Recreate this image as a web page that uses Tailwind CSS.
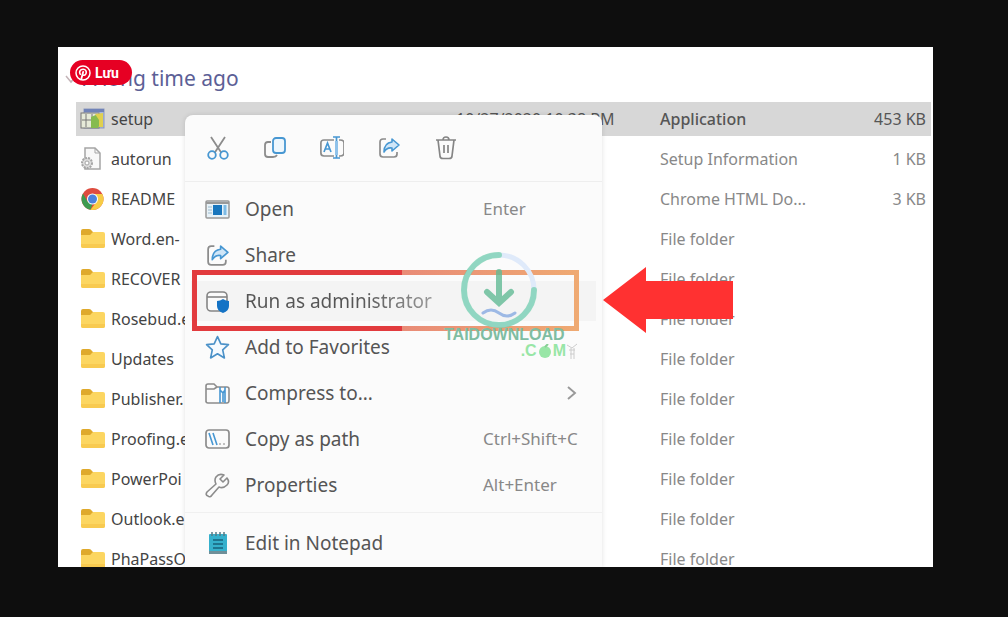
<!DOCTYPE html>
<html lang="vi">
<head>
<meta charset="utf-8">
<title>Run as administrator</title>
<script src="https://cdn.jsdelivr.net/npm/@tailwindcss/browser@4"></script>
</head>
<body class="h-screen overflow-hidden bg-[#0e0e0e] pt-[47px] pr-[75px] pb-[50px] pl-[58px] font-['Noto_Sans','Open_Sans',sans-serif]">
<svg class="hidden">
  <symbol id="folder" viewBox="0 0 24 20"><path d="M0 2Q0 0 2 0H8Q10 0 11 2L12 3H22V10H0Z" fill="#dfa92c"/><path d="M0 6H9L12 3H22Q24 3 24 5V17Q24 19 22 19H2Q0 19 0 17Z" fill="#fcd661"/><path d="M0 15H24V17Q24 19 22 19H2Q0 19 0 17Z" fill="#f8ca50"/></symbol>
  <symbol id="share" viewBox="0 0 24 24"><path d="M9 3H6Q3 3 3 6V18Q3 21 6 21H17Q20 21 20 18V16" fill="none" stroke="#8c8c8c" stroke-width="1.7"/><path d="M15 3L22 9L15 15V12Q10 11 7 16Q7 7 15 6Z" fill="#cfe6f8" stroke="#4797d2" stroke-width="1.6" stroke-linejoin="round"/></symbol>
</svg>
<main class="relative h-full overflow-hidden bg-white">
  <h1 class="flex h-[52px] items-center pt-3 pl-[25px] text-[21px] text-[#5c6096]">A long time ago</h1>
  <svg class="absolute top-[26px] left-[7px] h-3 w-3" viewBox="0 0 12 12"><path d="M1 3L6 9L11 3" fill="none" stroke="#c4b4b8" stroke-width="1.5"/></svg>
  <button class="absolute top-[13px] left-3 flex h-[25px] w-[62px] items-center gap-1 rounded-full bg-[#e60023] pl-[5px] font-['Roboto','Noto_Sans',sans-serif] text-sm font-bold text-white">
    <svg class="h-4 w-4" viewBox="0 0 16 16" fill="none" stroke="#fff" stroke-linecap="round"><circle cx="8" cy="8" r="7" stroke-width="1.500"/><path d="M5.300 9.300Q3.800 6.800 5.500 5.200Q8 3.200 10.400 5Q12 6.800 10.700 9.200Q9.400 11 7.700 9.800" stroke-width="1.500"/><path d="M8.200 6.800L6.400 13.800" stroke-width="1.800"/></svg>
    Lưu
  </button>

  <table class="w-full table-fixed border-collapse text-base whitespace-nowrap text-[#888]">
    <colgroup><col class="w-[398px]"><col class="w-[204px]"><col><col class="w-[120px]"></colgroup>
    <tbody>
      <tr class="text-[#555]">
        <td class="h-10 p-0 pl-[18px]"><div class="flex h-[34px] items-center bg-[#d7d7d7] text-[#444]">
          <svg class="mr-[6px] ml-1 h-6 w-[25px]" viewBox="0 0 25 24"><rect x="4" y="2" width="20" height="19" fill="#a8b7dc" stroke="#8d99bd"/><path d="M4 2H24V5H4Z" fill="#7083b8"/><rect x="1" y="6" width="18" height="15" fill="#e6ead9" stroke="#777"/><path d="M6 7V20M12 7V20M2 13H17" stroke="#777"/><path d="M11 10L18 7L22 12L18 21H11Z" fill="#86bb4f"/><path d="M15 7L23 6V20H19V13Z" fill="#e0d04f"/></svg>setup</div></td>
        <td class="p-0"><div class="flex h-[34px] items-center bg-[#d7d7d7]">10/27/2020 10:38 PM</div></td>
        <td class="p-0 font-medium"><div class="flex h-[34px] items-center bg-[#d7d7d7]">Application</div></td>
        <td class="p-0 pr-[2px]"><div class="flex h-[34px] items-center justify-end bg-[#d7d7d7] pr-[5px]">453 KB</div></td>
      </tr>
      <tr>
        <td class="h-10 p-0 pl-[22px]"><div class="flex items-center text-[#444]"><svg class="mr-[6px] h-6 w-[25px]" viewBox="0 0 25 24"><path d="M5 1H15L20 6V22H5Z" fill="#f8f8f8" stroke="#a5a5a5" stroke-width="1.500"/><path d="M15 1V6H20" fill="none" stroke="#a5a5a5"/><circle cx="7" cy="16" r="5" fill="#ddd" stroke="#a5a5a5" stroke-width="2" stroke-dasharray="2 1"/><circle cx="7" cy="16" r="2" fill="#fff" stroke="#a5a5a5"/></svg>autorun</div></td>
        <td></td><td class="p-0">Setup Information</td><td class="p-0 pr-[7px] text-right">1 KB</td>
      </tr>
      <tr>
        <td class="h-10 p-0 pl-[22px]"><div class="flex items-center text-[#444]"><svg class="mr-[6px] h-6 w-[25px]" viewBox="0 0 24 24"><circle cx="12" cy="12" r="11" fill="#de4c3f"/><path d="M2.500 6.500L7.200 14.800L12 17L10 22.800A11 11 0 0 1 2.500 6.500Z" fill="#3e9b50"/><path d="M12 7H21.800A11 11 0 0 1 10 22.800L16.300 14.500Z" fill="#f7cc45"/><circle cx="12" cy="12" r="5.500" fill="#fff"/><circle cx="12" cy="12" r="4.500" fill="#4a82dc"/></svg>README</div></td>
        <td></td><td class="p-0">Chrome HTML Do...</td><td class="p-0 pr-[7px] text-right">3 KB</td>
      </tr>
      <tr><td class="h-10 p-0 pl-[23px]"><div class="flex items-center text-[#444]"><svg class="mr-[6px] h-5 w-6"><use href="#folder"/></svg>Word.en-</div></td><td></td><td class="p-0">File folder</td><td></td></tr>
      <tr><td class="h-10 p-0 pl-[23px]"><div class="flex items-center text-[#444]"><svg class="mr-[6px] h-5 w-6"><use href="#folder"/></svg>RECOVER</div></td><td></td><td class="p-0">File folder</td><td></td></tr>
      <tr><td class="h-10 p-0 pl-[23px]"><div class="flex items-center text-[#444]"><svg class="mr-[6px] h-5 w-6"><use href="#folder"/></svg>Rosebud.e</div></td><td></td><td class="p-0">File folder</td><td></td></tr>
      <tr><td class="h-10 p-0 pl-[23px]"><div class="flex items-center text-[#444]"><svg class="mr-[6px] h-5 w-6"><use href="#folder"/></svg>Updates</div></td><td></td><td class="p-0">File folder</td><td></td></tr>
      <tr><td class="h-10 p-0 pl-[23px]"><div class="flex items-center text-[#444]"><svg class="mr-[6px] h-5 w-6"><use href="#folder"/></svg>Publisher.</div></td><td></td><td class="p-0">File folder</td><td></td></tr>
      <tr><td class="h-10 p-0 pl-[23px]"><div class="flex items-center text-[#444]"><svg class="mr-[6px] h-5 w-6"><use href="#folder"/></svg>Proofing.e</div></td><td></td><td class="p-0">File folder</td><td></td></tr>
      <tr><td class="h-10 p-0 pl-[23px]"><div class="flex items-center text-[#444]"><svg class="mr-[6px] h-5 w-6"><use href="#folder"/></svg>PowerPoi</div></td><td></td><td class="p-0">File folder</td><td></td></tr>
      <tr><td class="h-10 p-0 pl-[23px]"><div class="flex items-center text-[#444]"><svg class="mr-[6px] h-5 w-6"><use href="#folder"/></svg>Outlook.e</div></td><td></td><td class="p-0">File folder</td><td></td></tr>
      <tr><td class="h-10 p-0 pl-[23px]"><div class="flex items-center text-[#444]"><svg class="mr-[6px] h-5 w-6"><use href="#folder"/></svg>PhaPassO</div></td><td></td><td class="p-0">File folder</td><td></td></tr>
    </tbody>
  </table>

  <nav class="absolute top-[68px] bottom-0 left-[127px] w-[417px] overflow-hidden rounded-t-lg bg-[#fbfbfb] text-[19px] text-[#555] shadow-[0_0_5px_rgba(0,0,0,0.12)]">
    <div class="flex h-[67px] items-center gap-[33px] border-b border-[#eeeeee] pl-[21px]">
      <button aria-label="Cut"><svg class="h-6 w-6" viewBox="0 0 24 24" fill="none" stroke-width="1.800"><path d="M5 1L15.500 17M19 1L8.500 17" stroke="#8c8c8c"/><circle cx="6" cy="19" r="3.800" stroke="#4797d2"/><circle cx="18" cy="19" r="3.800" stroke="#4797d2"/></svg></button>
      <button aria-label="Copy"><svg class="h-6 w-6" viewBox="0 0 24 24" fill="none" stroke-width="1.800"><path d="M8 6H5Q2 6 2 9V18Q2 21 5 21H10Q13 21 14 19" stroke="#8c8c8c"/><rect x="10" y="2" width="12" height="15" rx="3" fill="#eef7fd" stroke="#4797d2"/></svg></button>
      <button aria-label="Rename"><svg class="h-6 w-6" viewBox="0 0 24 24" fill="none" stroke-width="1.700"><path d="M14 4H4Q0.900 4 0.900 7V17Q0.900 20 4 20H14M19 4H20Q24 4 24 7V17Q24 20 20 20H19" stroke="#8c8c8c"/><path d="M4 16L7.500 7L11 16M5 13H10M13 1H20M16.500 1V22M13 22H20" stroke="#4797d2"/><path d="M15 5H18V19H15Z" fill="#8fc2ea"/></svg></button>
      <button aria-label="Share"><svg class="h-6 w-6"><use href="#share"/></svg></button>
      <button aria-label="Delete"><svg class="h-6 w-6" viewBox="0 0 24 24" fill="none" stroke="#858585" stroke-width="1.700"><path d="M2 4H22M9 4Q9 1 12 1Q15 1 15 4M4 4L6 20Q6 22.500 9 22.500H15Q18 22.500 18 20L20 4M10 9V17M14 9V17"/></svg></button>
    </div>
    <ul class="border-b border-[#f0f0f0] pt-1 pb-1">
      <li><button class="flex h-[46px] w-full items-center pl-5"><svg class="mr-[15px] h-[25px] w-[25px]" viewBox="0 0 25 25"><rect x="1" y="4" width="23" height="17" rx="1" fill="#e8f2f8" stroke="#999" stroke-width="1.500"/><path d="M1 6H24" stroke="#999" stroke-width="2"/><path d="M3 10H7M3 13H7M3 16H7" stroke="#9bbacd"/><rect x="8" y="8" width="9" height="10" fill="#1976bd"/><path d="M20 8V18" stroke="#7ebbe5" stroke-width="3"/></svg>Open<span class="ml-auto w-[119px] text-left text-[17px] text-[#888]">Enter</span></button></li>
      <li><button class="flex h-[46px] w-full items-center pl-5"><svg class="mr-[15px] h-[25px] w-[25px]"><use href="#share"/></svg>Share</button></li>
      <li class="relative"><span class="absolute inset-x-[6px] top-[3px] bottom-[3px] bg-[#f4f4f4]"></span><button class="relative flex h-[46px] w-full items-center pl-5"><svg class="mr-[15px] h-[25px] w-[25px]" viewBox="0 0 25 25"><rect x="2" y="3" width="20" height="19" rx="4" fill="#fafafa" stroke="#858585" stroke-width="1.600"/><path d="M2 8H22" stroke="#858585" stroke-width="1.600"/><path d="M18 10Q21 12 24 12V17Q24 22 18 24Q12 22 12 17V12Q15 12 18 10Z" fill="#1473c5"/></svg><span class="bg-linear-to-r from-[#555] from-60% to-[#999] bg-clip-text text-transparent">Run as administrator</span></button></li>
      <li><button class="flex h-[46px] w-full items-center pl-5"><svg class="mr-[15px] h-[25px] w-[25px]" viewBox="0 0 24 24"><path d="M12 1.500L15.200 8.500L22.500 9.300L17 14.300L18.600 22L12 18L5.400 22L7 14.300L1.500 9.300L8.800 8.500Z" fill="#f5faff" stroke="#4b91c8" stroke-width="1.600" stroke-linejoin="round"/></svg>Add to Favorites</button></li>
      <li><button class="flex h-[46px] w-full items-center pl-5"><svg class="mr-[15px] h-[25px] w-[25px]" viewBox="0 0 25 25" fill="none"><path d="M1 21V5Q1 3 3 3H9L12 6H22Q24 6 24 8V19Q24 22 22 22H3Q1 22 1 20ZM1 8H9L12 6" stroke="#8c8c8c" stroke-width="1.600"/><path d="M15 6V22M20 6V22M15 9L18 12L20 9M18 12V21" stroke="#4797d2" stroke-width="1.600"/></svg>Compress to...<svg class="mr-[24px] ml-auto h-[14px] w-[14px]" viewBox="0 0 14 14"><path d="M4 1L11 7L4 13" fill="none" stroke="#999" stroke-width="1.900"/></svg></button></li>
      <li><button class="flex h-[46px] w-full items-center pl-5"><svg class="mr-[15px] h-[25px] w-[25px]" viewBox="0 0 25 25" fill="none"><rect x="1" y="3" width="23" height="18" rx="3" stroke="#8c8c8c" stroke-width="1.700"/><path d="M4 6L8 18M8 6L12 18" stroke="#4797d2" stroke-width="1.600"/><path d="M14 17H16M18 17H20" stroke="#888"/></svg>Copy as path<span class="ml-auto w-[119px] text-left text-[17px] text-[#888]">Ctrl+Shift+C</span></button></li>
      <li><button class="flex h-[46px] w-full items-center pl-5"><svg class="mr-[15px] h-[25px] w-[25px]" viewBox="0 0 25 25"><path d="M19 2Q14 0 11 4Q9 7 11 11L2 19Q0 22 3 23Q5 25 7 22L14 14Q18 16 22 12Q25 9 22 5L18 9L15 6Z" fill="none" stroke="#8c8c8c" stroke-width="1.600" stroke-linejoin="round"/></svg>Properties<span class="ml-auto w-[119px] text-left text-[17px] text-[#888]">Alt+Enter</span></button></li>
    </ul>
    <button class="mt-[7px] flex h-[46px] w-full items-center pl-5"><svg class="mr-[15px] h-[25px] w-[25px]" viewBox="0 0 25 25"><rect x="4" y="3" width="18" height="20" rx="1" fill="#35b0cc"/><path d="M4 20H22V23H4Z" fill="#6f8f99"/><path d="M7 1V5M11 1V5M15 1V5M19 1V5" stroke="#557985" stroke-width="1.500"/><path d="M8 9H18M8 13H18M8 17H18" stroke="#17617c" stroke-width="1.600"/></svg>Edit in Notepad</button>
  </nav>

  <svg class="absolute top-[222px] left-[133px] h-[63px] w-[389px]" viewBox="0 0 389 63" fill="none" stroke-width="5">
    <defs><linearGradient id="fade" gradientUnits="userSpaceOnUse" x1="210" y1="0" x2="389" y2="0"><stop stop-color="#e98b77"/><stop offset="1" stop-color="#efaa72"/></linearGradient></defs>
    <path d="M210 3.500H385.500V59.500H210" stroke="url(#fade)"/><path d="M211 3.500H3.500V59.500H211" stroke="#e23b3e"/>
  </svg>
  <svg class="absolute top-[219px] left-[544px] h-[68px] w-[132px]" viewBox="0 0 132 68"><path d="M1 34L44 1V15H131V53H44V67Z" fill="#ff3131"/></svg>

  <div class="absolute top-[205px] left-[386px] flex w-[134px] flex-col font-['Liberation_Sans',sans-serif] text-base leading-[14px] font-bold">
    <svg class="ml-[17px] h-[76px] w-[76px]" viewBox="0 0 76 76" fill="none" stroke-linecap="round"><circle cx="38" cy="38" r="35" stroke="#dfeafa" stroke-width="5"/><path d="M73 38A35 35 0 1 1 38 3" stroke="#5fc9a0" stroke-opacity=".62" stroke-width="6"/><path d="M38 20V50M26 40L38 51L50 40" stroke="#62ba95" stroke-opacity=".8" stroke-width="6"/><path d="M22 61Q30 55 38 61T54 61" stroke="#9db9e5" stroke-width="3"/></svg>
    <span class="text-[#7fbda2]">TAIDOWNLOAD</span>
    <span class="flex items-center self-end text-[#98e6a6]">.C<svg class="mx-px h-[14px] w-[14px]" viewBox="0 0 14 14"><circle cx="7" cy="8" r="6" fill="#98e6a6"/><path d="M7 3L10 0" stroke="#86cf94" stroke-width="2"/></svg>M<svg class="h-[18px] w-3" viewBox="0 0 12 18" fill="none" stroke="#ccc"><path d="M1 3L6 6L11 2M3 8H9M4 12H8M5 6V17M8 6V17"/></svg></span>
  </div>
</main>
</body>
</html>
